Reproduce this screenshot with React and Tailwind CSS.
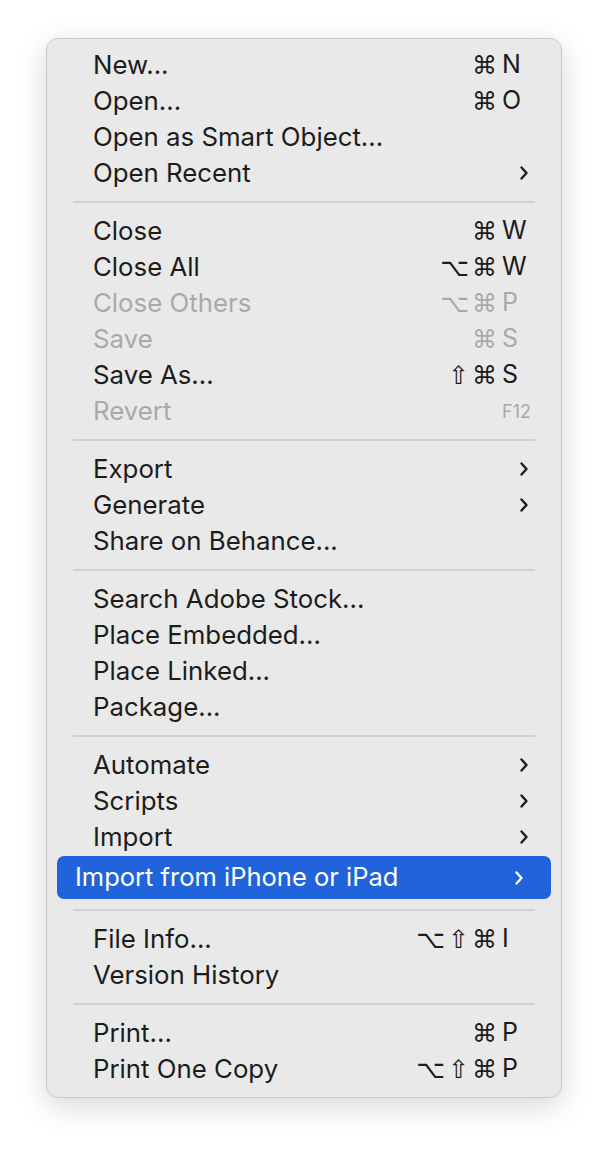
import React from "react";

const Chevron = ({ className = "" }) => (
  <svg width="10" height="16" viewBox="0 0 10 16" className={className} fill="none">
    <path d="M2.5 2.5 L7.5 8 L2.5 13.5" stroke="currentColor" strokeWidth="2.4" strokeLinecap="round" strokeLinejoin="round" />
  </svg>
);

const groups = [
  [
    { label: "New...", mods: "⌘", key: "N" },
    { label: "Open...", mods: "⌘", key: "O" },
    { label: "Open as Smart Object..." },
    { label: "Open Recent", sub: true },
  ],
  [
    { label: "Close", mods: "⌘", key: "W" },
    { label: "Close All", mods: "⌥⌘", key: "W" },
    { label: "Close Others", mods: "⌥⌘", key: "P", disabled: true },
    { label: "Save", mods: "⌘", key: "S", disabled: true },
    { label: "Save As...", mods: "⇧⌘", key: "S" },
    { label: "Revert", fkey: "F12", disabled: true },
  ],
  [
    { label: "Export", sub: true },
    { label: "Generate", sub: true },
    { label: "Share on Behance..." },
  ],
  [
    { label: "Search Adobe Stock..." },
    { label: "Place Embedded..." },
    { label: "Place Linked..." },
    { label: "Package..." },
  ],
  [
    { label: "Automate", sub: true },
    { label: "Scripts", sub: true },
    { label: "Import", sub: true },
    { label: "Import from iPhone or iPad", sub: true, active: true },
  ],
  [
    { label: "File Info...", mods: "⌥⇧⌘", key: "I" },
    { label: "Version History" },
  ],
  [
    { label: "Print...", mods: "⌘", key: "P" },
    { label: "Print One Copy", mods: "⌥⇧⌘", key: "P" },
  ],
];

const Row = ({ item }) => {
  if (item.active) {
    return (
      <div className="mt-[1px] mx-[10px] h-[43px] rounded-[7px] bg-[#2163db] text-white flex items-center pl-[18px] pr-[27px]">
        <span className="flex-1 whitespace-nowrap text-[25.5px]">{item.label}</span>
        <Chevron />
      </div>
    );
  }
  const color = item.disabled ? "text-[#a9a9a9]" : "text-[#1c1c1c]";
  return (
    <div className={`h-[36px] flex items-center pl-[46px] pr-[33px] ${color}`}>
      <span className="flex-1 whitespace-nowrap">{item.label}</span>
      {item.mods && (
        <span className="flex items-center">
          <span className="text-right tracking-[3px] font-['DejaVu_Sans',sans-serif] text-[25px] leading-none mr-[2px]">{item.mods}</span>
          <span className="w-[26px] text-left text-[25px]">{item.key}</span>
        </span>
      )}
      {item.fkey && <span className="text-[18px] mr-[-3px]">{item.fkey}</span>}
      {item.sub && <Chevron className="mr-[-1px]" />}
    </div>
  );
};

export default function App() {
  return (
    <div className="w-[608px] h-[1152px] bg-white pt-[38px] pl-[46px] font-['Inter','Liberation_Sans',sans-serif] text-[25.8px]">
      <div className="w-[516px] rounded-[12px] bg-[#e9e9e9] border border-[#c9c9c9] shadow-[0_8px_30px_rgba(0,0,0,0.16)] pt-[8px] pb-[10px]">
        {groups.map((g, gi) => (
          <div key={gi}>
            {gi > 0 && (
              <div className="h-[22px] flex items-center px-[26px]">
                <div className="h-[2px] w-full bg-[#d2d2d2]" />
              </div>
            )}
            {g.map((item, i) => (
              <Row key={i} item={item} />
            ))}
          </div>
        ))}
      </div>
    </div>
  );
}
